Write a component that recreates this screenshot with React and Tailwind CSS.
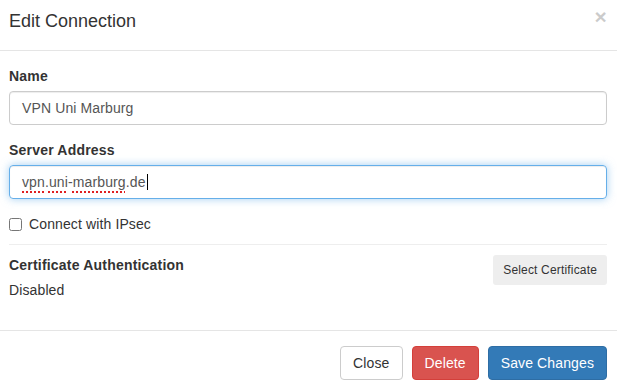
export default function App() {
  return (
    <div className="w-[617px] h-[391px] overflow-hidden bg-white font-['Liberation_Sans',Arial,sans-serif] text-[14px] leading-[20px] text-[#333] tracking-[0.12px]">
      {/* header */}
      <div className="h-[51px] border-b border-[#e5e5e5] pl-[9px] pr-[10px] pt-[9px] flex justify-between items-start">
        <h4 className="text-[18px] leading-[25.7px] font-normal tracking-normal">Edit Connection</h4>
        <button className="mt-[-3px] text-[21px] leading-[21px] font-bold text-black opacity-20">
          ×
        </button>
      </div>

      {/* body */}
      <div className="pl-[9px] pr-[10px] pt-[15px] pb-[15px]">
        <div className="mb-[15px]">
          <label className="block font-bold mb-[5px] tracking-[0.2px]">Name</label>
          <div className="h-[34px] flex items-center px-[12px] border border-[#ccc] rounded-[4px] text-[#555] shadow-[inset_0_1px_1px_rgba(0,0,0,0.075)]">
            VPN Uni Marburg
          </div>
        </div>

        <div className="mb-[15px]">
          <label className="block font-bold mb-[5px] tracking-[0.2px]">Server Address</label>
          <div className="h-[34px] flex items-center px-[12px] border border-[#66afe9] rounded-[4px] text-[#555] shadow-[inset_0_1px_1px_rgba(0,0,0,0.075),0_0_8px_rgba(102,175,233,0.6)]">
            <span className="underline decoration-dotted decoration-[#e02020] decoration-[1.5px] underline-offset-[4px]">vpn</span>
            .
            <span className="underline decoration-dotted decoration-[#e02020] decoration-[1.5px] underline-offset-[4px]">uni</span>
            -
            <span className="underline decoration-dotted decoration-[#e02020] decoration-[1.5px] underline-offset-[4px]">marburg</span>
            .de
            <span className="inline-block w-px h-[16px] bg-black ml-px" />
          </div>
        </div>

        <div className="mb-[10px] flex items-start">
          <input type="checkbox" className="m-0 mt-[4px] w-[13px] h-[13px]" />
          <span className="ml-[7px]">Connect with IPsec</span>
        </div>

        <hr className="border-0 border-t border-[#eee] mb-[10px]" />

        <div className="flex justify-between items-start mb-[15px]">
          <div>
            <div className="font-bold mb-[5px] tracking-[0.2px]">Certificate Authentication</div>
            <div>Disabled</div>
          </div>
          <button className="h-[30px] px-[10px] text-[12px] leading-[18px] bg-[#eee] rounded-[3px] text-[#333] tracking-[0.17px]">
            Select Certificate
          </button>
        </div>
      </div>

      {/* footer */}
      <div className="border-t border-[#e5e5e5] pt-[15px] pl-[9px] pr-[10px] flex justify-end gap-[9px]">
        <button className="h-[34px] px-[12px] border border-[#ccc] rounded-[4px] bg-white text-[#333]">
          Close
        </button>
        <button className="h-[34px] px-[12px] border border-[#d43f3a] rounded-[4px] bg-[#d9534f] text-white">
          Delete
        </button>
        <button className="h-[34px] px-[12px] border border-[#2e6da4] rounded-[4px] bg-[#337ab7] text-white">
          Save Changes
        </button>
      </div>
    </div>
  );
}
